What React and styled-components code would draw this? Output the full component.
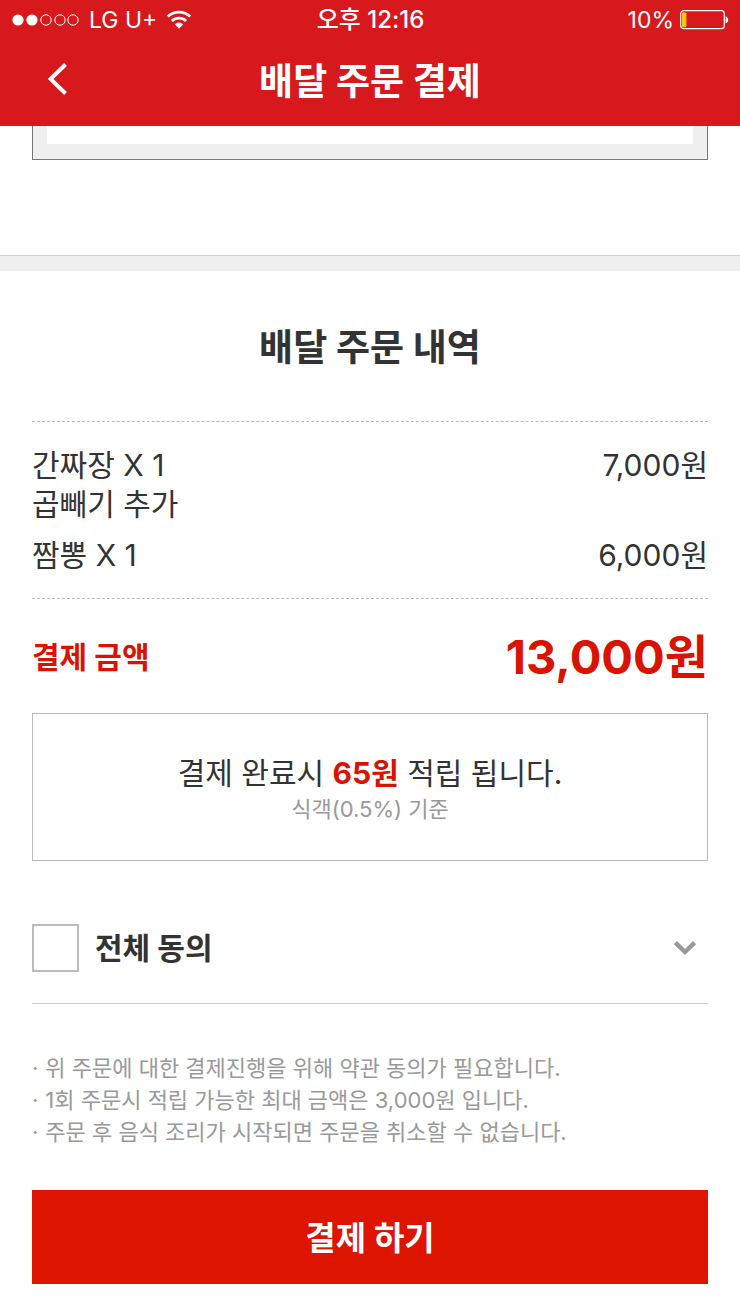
import React, { useState } from "react";
import styled, { createGlobalStyle } from "styled-components";

const GlobalStyle = createGlobalStyle`
  * {
    box-sizing: border-box;
  }

  body {
    margin: 0;
    background: #fff;
    color: #333;
    font-family: Inter, "Noto Sans CJK KR", sans-serif;
    font-size: 30px;
    line-height: 39px;
  }

  h1, h2, p, ul, dl, dd {
    margin: 0;
    padding: 0;
  }

  ul {
    list-style: none;
  }

  button {
    border: 0;
    padding: 0;
    background: none;
    color: inherit;
    font-family: inherit;
    cursor: pointer;
  }
`;

const Header = styled.header`
  background: #d7191d;
  color: #fff;
`;

const StatusBar = styled.div`
  display: grid;
  grid-template-columns: 1fr auto 1fr;
  align-items: center;
  height: 40px;
  padding: 0 11px 0 12px;
  font-size: 23px;
  line-height: 40px;
`;

const StatusGroup = styled.div`
  display: flex;
  align-items: center;
  justify-content: ${(props) => (props.$end ? "flex-end" : "flex-start")};
  gap: ${(props) => (props.$end ? 6 : 9)}px;
`;

const Clock = styled.time`
  font-size: 24px;
  font-weight: 500;
`;

const NavBar = styled.div`
  display: grid;
  grid-template-columns: 80px 1fr 80px;
  align-items: center;
  height: 86px;
  padding: 0 18px 8px;
`;

const BackButton = styled.button`
  display: flex;
  align-items: center;
  justify-content: center;
  height: 60px;
`;

const Title = styled.h1`
  padding-top: 6px;
  text-align: center;
  font-size: 37px;
  line-height: 54px;
  font-weight: 700;
`;

const FormSection = styled.section`
  padding: 0 32px 95px;
`;

const FormFrame = styled.div`
  border: 1px solid #777;
  border-top: 0;
  background: #efefef;
  padding: 0 14px 15px;
`;

const FormBody = styled.div`
  height: 18px;
  background: #fff;
`;

const Divider = styled.div`
  height: 16px;
  border-top: 1px solid #d2d2d2;
  background: #efefef;
`;

const OrderSection = styled.main`
  padding: 0 32px 32px;
`;

const SectionTitle = styled.h2`
  padding: 50px 0 46px;
  text-align: center;
  font-size: 37px;
  line-height: 54px;
  font-weight: 700;
`;

const OrderList = styled.ul`
  display: flex;
  flex-direction: column;
  gap: 12px;
  padding: 24px 0 23px;
  border-top: 1px dashed #bbb;
  border-bottom: 1px dashed #bbb;
`;

const OrderItem = styled.li`
  display: flex;
  justify-content: space-between;
`;

const Total = styled.dl`
  display: flex;
  align-items: center;
  justify-content: space-between;
  height: 114px;
  padding-top: 2px;
  color: #d81400;
  font-weight: 700;
`;

const TotalPrice = styled.dd`
  font-size: 47px;
  line-height: 60px;
`;

const RewardBox = styled.div`
  padding: 40px 20px 35px;
  border: 1px solid #bbb;
  text-align: center;
`;

const RewardPoint = styled.strong`
  color: #d81400;
  font-weight: 700;
`;

const RewardGrade = styled.p`
  color: #999;
  font-size: 22px;
  line-height: 32px;
`;

const Agreement = styled.div`
  display: flex;
  align-items: center;
  justify-content: space-between;
  margin-top: 32px;
  height: 111px;
  border-bottom: 1px solid #ccc;
`;

const AgreeLabel = styled.label`
  display: flex;
  align-items: center;
  gap: 16px;
  font-weight: 700;
  cursor: pointer;
`;

const Checkbox = styled.input`
  appearance: none;
  width: 47px;
  height: 48px;
  margin: 0;
  border: 2px solid #bbb;
  background: #fff;

  &:checked {
    background: #d81400;
    box-shadow: inset 0 0 0 8px #fff;
  }
`;

const ToggleButton = styled.button`
  display: flex;
  align-items: center;
  justify-content: center;
  width: 46px;
  height: 48px;

  svg {
    transform: ${(props) => (props.$open ? "rotate(180deg)" : "none")};
  }
`;

const NoteList = styled.ul`
  padding: 48px 0 42px;
  color: #999;
  font-size: 22px;
  line-height: 32px;
`;

const Note = styled.li`
  display: flex;
  gap: 7px;

  &::before {
    content: "·";
  }
`;

const PayButton = styled.button`
  display: block;
  width: 100%;
  height: 94px;
  padding-top: 2px;
  background: #dc1400;
  color: #fff;
  font-size: 33px;
  line-height: 48px;
  font-weight: 700;
`;

const SignalIcon = () => (
  <svg width="68" height="12" viewBox="0 0 68 12" aria-hidden="true">
    {[6, 20, 34, 48, 61].map((cx, i) => (
      <circle
        key={cx}
        cx={cx}
        cy="6"
        r={i < 2 ? 5.6 : 5.2}
        fill={i < 2 ? "#fff" : "none"}
        stroke={i < 2 ? "none" : "#fff"}
      />
    ))}
  </svg>
);

const WifiIcon = () => (
  <svg width="26" height="20" viewBox="0 0 26 20" aria-hidden="true">
    <g fill="none" stroke="#fff" strokeWidth="2.8">
      <path d="M1.8 6.6a16 16 0 0 1 22.4 0" />
      <path d="M5.9 11a10.2 10.2 0 0 1 14.2 0" />
    </g>
    <path d="M8.8 14.2a6.2 6.2 0 0 1 8.4 0L13 18.8z" fill="#fff" />
  </svg>
);

const BatteryIcon = () => (
  <svg width="49" height="20" viewBox="0 0 49 20" aria-hidden="true">
    <rect x="0.7" y="0.7" width="43.6" height="18" rx="3" fill="none" stroke="#fff" strokeWidth="1.2" />
    <rect x="2" y="2.4" width="4.4" height="14.8" rx="1" fill="#ffc40c" />
    <path d="M45.6 6.2c3.4 1 3.4 6.2 0 7.2z" fill="#fff" />
  </svg>
);

const BackIcon = () => (
  <svg width="20" height="32" viewBox="0 0 20 32" aria-hidden="true">
    <path d="M17.5 1.5 2.5 16l15 14.5" fill="none" stroke="#fff" strokeWidth="4" />
  </svg>
);

const ChevronIcon = () => (
  <svg width="24" height="16" viewBox="0 0 24 16" aria-hidden="true">
    <path d="m2.4 2.6 9.6 9.4 9.6-9.4" fill="none" stroke="#999" strokeWidth="4.4" />
  </svg>
);

const orderItems = [
  { name: "간짜장 X 1", option: "곱빼기 추가", price: "7,000원" },
  { name: "짬뽕 X 1", price: "6,000원" },
];

const notes = [
  "위 주문에 대한 결제진행을 위해 약관 동의가 필요합니다.",
  "1회 주문시 적립 가능한 최대 금액은 3,000원 입니다.",
  "주문 후 음식 조리가 시작되면 주문을 취소할 수 없습니다.",
];

const App = () => {
  const [agreed, setAgreed] = useState(false);
  const [open, setOpen] = useState(false);

  return (
    <>
      <GlobalStyle />
      <Header>
        <StatusBar>
          <StatusGroup>
            <SignalIcon />
            <span>LG U+</span>
            <WifiIcon />
          </StatusGroup>
          <Clock>오후 12:16</Clock>
          <StatusGroup $end>
            <span>10%</span>
            <BatteryIcon />
          </StatusGroup>
        </StatusBar>
        <NavBar>
          <BackButton type="button" aria-label="뒤로">
            <BackIcon />
          </BackButton>
          <Title>배달 주문 결제</Title>
        </NavBar>
      </Header>

      <FormSection>
        <FormFrame>
          <FormBody />
        </FormFrame>
      </FormSection>
      <Divider />

      <OrderSection>
        <SectionTitle>배달 주문 내역</SectionTitle>
        <OrderList>
          {orderItems.map((item) => (
            <OrderItem key={item.name}>
              <div>
                <p>{item.name}</p>
                {item.option && <p>{item.option}</p>}
              </div>
              <span>{item.price}</span>
            </OrderItem>
          ))}
        </OrderList>

        <Total>
          <dt>결제 금액</dt>
          <TotalPrice>13,000원</TotalPrice>
        </Total>

        <RewardBox>
          <p>
            결제 완료시 <RewardPoint>65원</RewardPoint> 적립 됩니다.
          </p>
          <RewardGrade>식객(0.5%) 기준</RewardGrade>
        </RewardBox>

        <Agreement>
          <AgreeLabel>
            <Checkbox
              type="checkbox"
              checked={agreed}
              onChange={(e) => setAgreed(e.target.checked)}
            />
            전체 동의
          </AgreeLabel>
          <ToggleButton
            type="button"
            aria-label="약관 펼치기"
            aria-expanded={open}
            $open={open}
            onClick={() => setOpen(!open)}
          >
            <ChevronIcon />
          </ToggleButton>
        </Agreement>

        <NoteList>
          {notes.map((note) => (
            <Note key={note}>{note}</Note>
          ))}
        </NoteList>

        <PayButton type="button">결제 하기</PayButton>
      </OrderSection>
    </>
  );
};

export default App;
